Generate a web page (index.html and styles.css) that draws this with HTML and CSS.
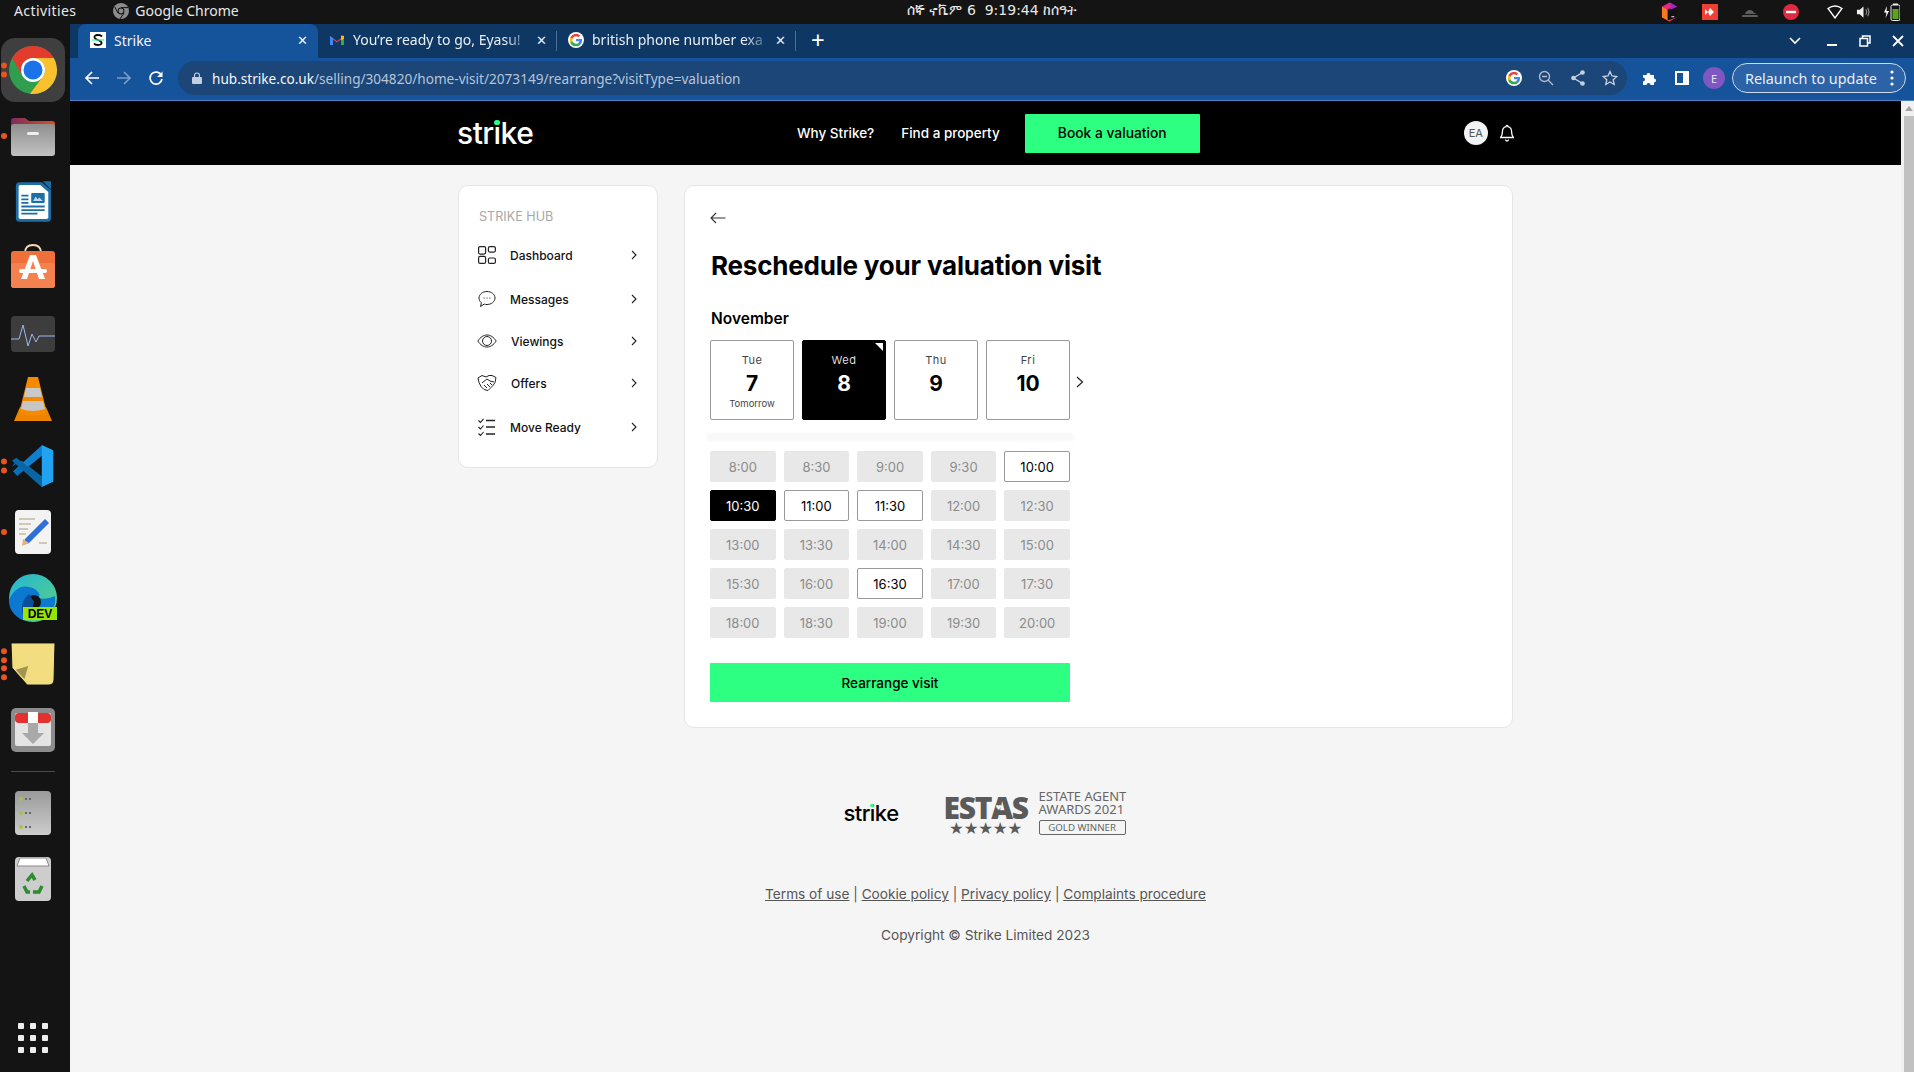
FILE: index.html
```html
<!DOCTYPE html>
<html lang="en">
<head>
<meta charset="utf-8">
<title>Strike</title>
<link rel="stylesheet" href="styles.css">
</head>
<body>
<header class="topbar">
  <span class="activities">Activities</span>
  <span class="app-name">
    <svg class="app-icon" viewBox="0 0 16 16"><circle cx="8" cy="8" r="8" fill="#8b8b8b"/><circle cx="8" cy="8" r="3.4" fill="#141414"/><circle cx="8" cy="8" r="2.4" fill="#8b8b8b"/><path d="M8 4.6h7M5 10l-3.2-6M11 10l-4 6" stroke="#141414" stroke-width="1"/></svg>
    Google Chrome
  </span>
  <span class="clock">ሰኞ ኖቬም 6 &nbsp;9:19:44 ከሰዓት</span>
  <div class="tray">
    <svg class="tray-a" viewBox="0 0 18 20"><path d="M9 0l8 4.500v11L9 20 1 15.500v-11z" fill="#e6287e"/><path d="M1 4.500L9 9v11l-8-4.500z" fill="#f47a20"/><path d="M7 7l10-2.500V15.500L7 19z" fill="#111"/><path d="M10 0l7 4.500-7 3z" fill="#a024c8"/><path d="M11 15h3" stroke="#fff"/></svg>
    <svg class="tray-b" viewBox="0 0 16 16"><rect width="16" height="16" fill="#ee4035"/><path d="M3 5l3 3-3 3zM8 4l4 4-4 4-2-4z" fill="#fff"/></svg>
    <svg class="tray-c" viewBox="0 0 16 10"><path d="M0 10c0-2 1-3 3-3 1-4 7-6 9-1 2 0 4 2 4 4z" fill="#5e5e5e"/><path d="M0 7.500h16" stroke="#141414"/></svg>
    <svg class="tray-d" viewBox="0 0 16 16"><circle cx="8" cy="8" r="8" fill="#df2a3f"/><rect x="3" y="6.800" width="10" height="2.400" fill="#fff"/></svg>
    <svg class="tray-e" viewBox="0 0 16 14"><path d="M1 3.500Q8-1.500 15 3.500L8 13z" fill="none" stroke="#fff" stroke-width="1.400"/></svg>
    <svg class="tray-f" viewBox="0 0 16 14"><path d="M1 4.500h3L8 1v12L4 9.500H1z" fill="#eee"/><path d="M10.500 4q2 3 0 6M12.500 2.500q3 4.500 0 9" fill="none" stroke="#aaa"/></svg>
    <svg class="tray-g" viewBox="0 0 16 18"><path d="M3 3L0 9.500h2.500L1.500 15 5 8H2.500z" fill="#fff"/><rect x="7" y="2" width="9" height="15.500" rx="1.500" fill="none" stroke="#eee"/><rect x="9" y="0.500" width="5" height="1.500" fill="#eee"/><rect x="8.500" y="6" width="6" height="10" fill="#5aa51d"/></svg>
  </div>
</header>

<div class="desktop">
  <aside class="dock">
    <div class="dock-item dock-active">
      <span class="dots"><i></i><i></i></span>
      <svg class="ic-chrome" viewBox="0 0 48 48"><circle cx="24" cy="24" r="24" fill="#2f9e4f"/><path d="M3.200 12A24 24 0 0 1 44.800 12H24A12 12 0 0 0 13.600 18L13.600 30z" fill="#e33b2e"/><path d="M44.800 12A24 24 0 0 1 21 47.800L34.400 30A12 12 0 0 0 24 12z" fill="#fbc02d"/><circle cx="24" cy="24" r="12" fill="#fff"/><circle cx="24" cy="24" r="9.500" fill="#1a73e8"/></svg>
    </div>
    <div class="dock-item">
      <span class="dots"><i></i></span>
      <svg class="ic-44" viewBox="0 0 44 40"><path d="M0 5q0-3 3-3h11l4 3h23q3 0 3 3v14H0z" fill="url(#folder)"/><defs><linearGradient id="folder"><stop offset="0" stop-color="#7b2c5e"/><stop offset="1" stop-color="#d8531e"/></linearGradient><linearGradient id="grey" x1="0" y1="0" x2="0" y2="1"><stop offset="0" stop-color="#8f8f8f"/><stop offset="1" stop-color="#c2c2c2"/></linearGradient></defs><rect y="8" width="44" height="32" rx="3" fill="url(#grey)"/><rect x="16" y="16" width="12" height="3" rx="1.500" fill="#eee"/></svg>
    </div>
    <div class="dock-item">
      <svg class="ic-36" viewBox="0 0 40 46"><path d="M5 1h25l10 9v31q0 4-4 4H5q-4 0-4-4V5q0-4 4-4z" fill="#1c6ea4"/><path d="M6 4h22l9 8v28q0 2-2 2H6q-2 0-2-2V6q0-2 2-2z" fill="#fff"/><path d="M31 0h9v9z" fill="#1c6ea4"/><path d="M7 16h8M7 20h8M7 24h8M7 28h26M7 32h26M7 36h18" stroke="#1c6ea4" stroke-width="2"/><rect x="18" y="13" width="15" height="11" rx="1" fill="#1c6ea4"/><path d="M20 22l3-5 2 3 2-2 4 4z" fill="#bcd9ee"/></svg>
    </div>
    <div class="dock-item">
      <svg class="ic-44 ic-store" viewBox="0 0 44 44"><path d="M14 9q0-8 8-8t8 8" fill="none" stroke="#f4d9b5" stroke-width="1.800"/><rect y="7" width="44" height="37" rx="3" fill="#f0703a"/><rect y="19" width="44" height="25" rx="3" fill="#f48250"/><path d="M19 11h6l9 24h-6l-6-18-6 18h-6z" fill="#fff"/><rect x="8" y="25" width="28" height="4" rx="2" fill="#fff"/></svg>
    </div>
    <div class="dock-item">
      <svg class="ic-44" viewBox="0 0 44 36"><rect width="44" height="36" rx="4" fill="#3d3d3d"/><path d="M0 23h8l4-14 5 21 4-12 4 8 3-6h16" fill="none" stroke="#9db4ee" stroke-width="1"/></svg>
    </div>
    <div class="dock-item">
      <svg class="ic-vlc" viewBox="0 0 40 46"><path d="M1 44l6-14h26l6 14z" fill="#ef8400"/><path d="M15 0h10l9 36q-14 6-28 0z" fill="#f58a00"/><path d="M13 11h14l2 9H11z" fill="#c9c9c9"/><path d="M10 24h20l2 8q-12 4-24 0z" fill="#c6c6c6"/></svg>
    </div>
    <div class="dock-item">
      <span class="dots"><i></i><i></i></span>
      <svg class="ic-44" viewBox="0 0 100 100"><path d="M70 98L12 44l-10 9 10-16 14 2 44 35z" fill="#0b6fb4"/><path d="M5 62l66-60v24L14 72z" fill="#0f7fce"/><path d="M70 2l26 12v72L70 98z" fill="#22a3f2"/><path d="M5 62l9 10 15-13-11-8z" fill="#0b6fb4"/><path d="M2 38l10-7 58 44v23z" fill="#0865a6"/></svg>
    </div>
    <div class="dock-item">
      <span class="dots"><i></i></span>
      <svg class="ic-36" viewBox="0 0 36 44"><rect width="36" height="44" rx="4" fill="#f3f3f3"/><path d="M4 9h16M4 14h12M4 19h9M4 24h7M24 33h8" stroke="#cfc8b4" stroke-width="2"/><path d="M30 9l4 4-20 20-6 2 2-6z" fill="#2f6fd8"/><path d="M8 29l6 4-7 3z" fill="#e5b27a"/></svg>
    </div>
    <div class="dock-item">
      <svg class="ic-edge" viewBox="0 0 48 48"><defs><linearGradient id="edge" x1="0" y1="0" x2="1" y2="1"><stop offset="0" stop-color="#22b5d8"/><stop offset="1" stop-color="#5ed47a"/></linearGradient></defs><circle cx="24" cy="24" r="24" fill="url(#edge)"/><path d="M0 26Q8 8 24 14q8 4 6 10 8 2 16-2 2 14-12 24H14Q0 40 0 26z" fill="#0b78d1"/><circle cx="25" cy="28" r="7" fill="#141414"/><path d="M14 42q-4-14 6-22l5 8-4 14z" fill="#0b4f9c"/><rect x="14" y="33" width="34" height="13" fill="#97e600"/><text x="31" y="44" class="dev-text">DEV</text></svg>
    </div>
    <div class="dock-item">
      <span class="dots dots-four"><i></i><i></i><i></i><i></i></span>
      <svg class="ic-note" viewBox="0 0 48 46"><path d="M1 1l46 0-1 38q0 6-6 6H18L10 36 2 27z" fill="#f2dd80" stroke="#111" stroke-width="1"/><path d="M6 29l13-4-4 14z" fill="#a39650"/></svg>
    </div>
    <div class="dock-item">
      <svg class="ic-44" viewBox="0 0 44 44"><rect width="44" height="44" rx="5" fill="#8c8c8c"/><rect x="4" y="5" width="36" height="33" rx="2" fill="#e4e4e4"/><rect x="4" y="5" width="36" height="10" rx="4" fill="#e33131"/><rect x="17" y="4" width="10" height="11" fill="#fff"/><path d="M17 15h10v10h6L22 36 11 25h6z" fill="#a9a9a9"/></svg>
    </div>
    <div class="dock-sep"></div>
    <div class="dock-item">
      <svg class="ic-36" viewBox="0 0 36 44"><defs><linearGradient id="drive" x1="0" y1="0" x2="0" y2="1"><stop offset="0" stop-color="#9a9a9a"/><stop offset="1" stop-color="#cdcdcd"/></linearGradient></defs><rect width="36" height="44" rx="4" fill="url(#drive)"/><g fill="#a6c44a"><circle cx="6" cy="8" r="2"/><circle cx="6" cy="22" r="2"/><circle cx="6" cy="36" r="2"/></g><path d="M10 7h2v2h-2zM14 7h2v2h-2zM10 21h2v2h-2zM14 21h2v2h-2zM10 35h2v2h-2zM14 35h2v2h-2z" fill="#666"/></svg>
    </div>
    <div class="dock-item">
      <svg class="ic-36" viewBox="0 0 36 44"><rect width="36" height="44" rx="4" fill="#cdcdcd"/><path d="M5 1h26l3 8H2z" fill="#fff" stroke="#888"/><path d="M12 24l5-6 3 5M27 29l-3 6h-6M9 29l3 6h3" fill="none" stroke="#2e8b2e" stroke-width="3.500"/></svg>
    </div>
    <div class="apps-grid"><i></i><i></i><i></i><i></i><i></i><i></i><i></i><i></i><i></i></div>
  </aside>

  <div class="browser">
    <div class="tabstrip">
      <div class="tab tab-active">
        <svg class="fav" viewBox="0 0 16 16"><rect width="16" height="16" fill="#fff"/><path d="M12 4.500Q11 3 8 3 4 3 4.500 5.500 5 7 8 8t3.500 2.500Q12 13 8 13q-3 0-4-1.500" fill="none" stroke="#000" stroke-width="1.800"/><path d="M2 8h12" stroke="#2dff82" stroke-width="1.200"/></svg>
        <span class="tab-title">Strike</span>
        <span class="tab-x">✕</span>
      </div>
      <div class="tab">
        <svg class="fav" viewBox="0 0 16 16"><path d="M1 13V4l7 5 7-5v9h-3V7.500L8 10.500 4 7.500V13z" fill="#ea4335"/><path d="M1 13V4l3 2.200V13z" fill="#4285f4"/><path d="M15 13V4l-3 2.200V13z" fill="#34a853"/><path d="M12 3.500l3 .5v2.500l-3 2z" fill="#fbbc04"/></svg>
        <span class="tab-title tab-fade">You’re ready to go, Eyasu!</span>
        <span class="tab-x">✕</span>
      </div>
      <div class="tab-div"></div>
      <div class="tab tab-third">
        <svg class="fav" viewBox="0 0 48 48"><circle cx="24" cy="24" r="24" fill="#fff"/><path d="M42 24.500c0-1.300-.1-2.500-.3-3.500H24v7h10.200a9 9 0 0 1-3.800 5.700v4.700h6.100c3.500-3.300 5.500-8 5.500-13.900z" fill="#4285f4"/><path d="M24 43c5 0 9.300-1.700 12.500-4.600l-6.100-4.700c-1.700 1.100-3.900 1.800-6.400 1.800-4.900 0-9-3.300-10.500-7.700H7.200v4.900A19 19 0 0 0 24 43z" fill="#34a853"/><path d="M13.500 27.800a11 11 0 0 1 0-7.400v-4.900H7.200a19 19 0 0 0 0 17.200z" fill="#fbbc05"/><path d="M24 12.800c2.800 0 5.200 1 7.200 2.800l5.400-5.400A19 19 0 0 0 7.200 15.500l6.300 4.900c1.500-4.400 5.600-7.600 10.500-7.600z" fill="#ea4335"/></svg>
        <span class="tab-title tab-fade">british phone number exa</span>
        <span class="tab-x">✕</span>
      </div>
      <div class="tab-div"></div>
      <span class="tab-plus">+</span>
      <div class="win-controls">
        <svg class="win-chev" viewBox="0 0 12 8"><path d="M1 1l5 5 5-5" fill="none" stroke="#fff" stroke-width="1.600"/></svg>
        <svg class="win-min" viewBox="0 0 12 12"><rect y="9" width="10" height="2" fill="#fff"/></svg>
        <svg class="win-max" viewBox="0 0 12 12"><path d="M3.500 3.500V1h7.500v7H8.500M1 3.500h7.500V11H1z" fill="none" stroke="#fff" stroke-width="1.500"/></svg>
        <svg class="win-close" viewBox="0 0 12 12"><path d="M1 1l10 10M11 1L1 11" stroke="#fff" stroke-width="1.800"/></svg>
      </div>
    </div>

    <div class="toolbar">
      <svg class="nav-ic" viewBox="0 0 16 16"><path d="M15 8H2M8 2L2 8l6 6" fill="none" stroke="#fff" stroke-width="1.700"/></svg>
      <svg class="nav-ic nav-fwd" viewBox="0 0 16 16"><path d="M1 8h13M8 2l6 6-6 6" fill="none" stroke="#7f9cc2" stroke-width="1.700"/></svg>
      <svg class="nav-ic nav-rel" viewBox="0 0 16 16"><path d="M13.500 5.500A6 6 0 1 0 14 9" fill="none" stroke="#fff" stroke-width="1.700"/><path d="M14.500 1.500v5.500H9z" fill="#fff"/></svg>
      <div class="omnibox">
        <svg class="lock" viewBox="0 0 10 12"><path d="M2.500 5V3.500a2.500 2.500 0 0 1 5 0V5" fill="none" stroke="#c3cfdf" stroke-width="1.100"/><rect y="5" width="10" height="7" rx="1" fill="#c3cfdf"/></svg>
        <span class="url"><b>hub.strike.co.uk</b>/selling/304820/home-visit/2073149/rearrange?visitType=valuation</span>
        <svg class="omni-g" viewBox="0 0 48 48"><circle cx="24" cy="24" r="24" fill="#fff"/><path d="M42 24.500c0-1.300-.1-2.500-.3-3.500H24v7h10.200a9 9 0 0 1-3.800 5.700v4.700h6.100c3.500-3.300 5.500-8 5.500-13.900z" fill="#4285f4"/><path d="M24 43c5 0 9.300-1.700 12.500-4.600l-6.100-4.700c-1.700 1.100-3.900 1.800-6.400 1.800-4.900 0-9-3.300-10.500-7.700H7.200v4.900A19 19 0 0 0 24 43z" fill="#34a853"/><path d="M13.500 27.800a11 11 0 0 1 0-7.400v-4.900H7.200a19 19 0 0 0 0 17.200z" fill="#fbbc05"/><path d="M24 12.800c2.800 0 5.200 1 7.200 2.800l5.400-5.400A19 19 0 0 0 7.200 15.500l6.300 4.900c1.500-4.400 5.600-7.600 10.500-7.600z" fill="#ea4335"/></svg>
        <svg class="omni-ic" viewBox="0 0 16 16"><circle cx="6.500" cy="6.500" r="5" fill="none" stroke="#aebccd" stroke-width="1.400"/><path d="M4 6.500h5M10 10l5 5" stroke="#aebccd" stroke-width="1.400"/></svg>
        <svg class="omni-ic" viewBox="0 0 16 16"><path d="M12.500 2.500l-9 5.500 9 5.500" fill="none" stroke="#c5d0de" stroke-width="1.400"/><circle cx="12.500" cy="2.500" r="2.300" fill="#c5d0de"/><circle cx="3.500" cy="8" r="2.300" fill="#c5d0de"/><circle cx="12.500" cy="13.500" r="2.300" fill="#c5d0de"/></svg>
        <svg class="omni-ic omni-last" viewBox="0 0 16 16"><path d="M8 1.500l2 4.500 4.800.5-3.600 3.200 1 4.800L8 12l-4.200 2.500 1-4.800L1.200 6.500 6 6z" fill="none" stroke="#c5d0de" stroke-width="1.300"/></svg>
      </div>
      <svg class="tool-puzzle" viewBox="0 0 16 16"><path d="M1 5h3.500a2 2 0 1 1 4 0H12v3.500a2 2 0 1 1 0 4V15H8.500a2 2 0 1 0-4 0H1v-3.500a2 2 0 1 0 0-4z" fill="#fff"/></svg>
      <svg class="tool-panel" viewBox="0 0 14 14"><rect width="14" height="14" fill="#fff"/><rect x="2" y="2" width="6" height="10" fill="#15539a"/></svg>
      <span class="profile">E</span>
      <div class="relaunch">
        <span>Relaunch to update</span>
        <svg class="kebab" viewBox="0 0 4 16"><circle cx="2" cy="2" r="1.600" fill="#fff"/><circle cx="2" cy="8" r="1.600" fill="#fff"/><circle cx="2" cy="14" r="1.600" fill="#fff"/></svg>
      </div>
    </div>

    <div class="viewport">
      <div class="page">
        <div class="site-header">
          <div class="logo logo-light">str<span class="logo-i">i<em></em></span>ke</div>
          <nav class="site-nav">
            <a>Why Strike?</a>
            <a>Find a property</a>
            <a class="btn-book">Book a valuation</a>
          </nav>
          <span class="avatar">EA</span>
          <svg class="bell" viewBox="0 0 14 18"><path d="M7 1.500a1 1 0 0 1 1 1.200c3 .6 3.600 3 3.600 5.300 0 3 .9 4.300 1.800 5.500H.6c.9-1.200 1.800-2.500 1.800-5.500 0-2.300.6-4.700 3.600-5.300a1 1 0 0 1 1-1.200z" fill="none" stroke="#fff" stroke-width="1.300"/><path d="M5.500 15.500a1.500 1.500 0 0 0 3 0" fill="none" stroke="#fff" stroke-width="1.300"/></svg>
        </div>

        <div class="layout">
          <aside class="side-card">
            <div class="side-title">STRIKE HUB</div>
            <ul class="side-list">
              <li class="side-row">
                <svg class="side-ic" viewBox="0 0 18 18"><g fill="none" stroke="#222" stroke-width="1.200"><rect x=".6" y=".6" width="7" height="7.500" rx="1.500"/><rect x="10.400" y=".6" width="7" height="5.500" rx="1.500"/><rect x=".6" y="10.400" width="7" height="7" rx="1.500"/><rect x="10.400" y="12" width="7" height="5.400" rx="1.500"/></g></svg>
                <span>Dashboard</span>
                <svg class="chev" viewBox="0 0 6 10"><path d="M1 1l4 4-4 4" fill="none" stroke="#222" stroke-width="1.100"/></svg>
              </li>
              <li class="side-row">
                <svg class="side-ic" viewBox="0 0 18 18"><path d="M9 1.500c4.400 0 8 2.800 8 6.500s-3.600 6.500-8 6.500c-1 0-2-.1-2.800-.4L2.500 16.500l.9-3.700C1.900 11.600 1 9.900 1 8c0-3.700 3.600-6.500 8-6.500z" fill="none" stroke="#222" stroke-width="1"/><path d="M5.600 8h1M8.500 8h1M11.400 8h1" stroke="#222" stroke-width="1.200"/></svg>
                <span>Messages</span>
                <svg class="chev" viewBox="0 0 6 10"><path d="M1 1l4 4-4 4" fill="none" stroke="#222" stroke-width="1.100"/></svg>
              </li>
              <li class="side-row row-view">
                <svg class="side-ic side-ic-wide" viewBox="0 0 20 14"><path d="M.8 7C3.500 3 6.500 1 10 1s6.500 2 9.200 6c-2.700 4-5.700 6-9.200 6S3.500 11 .8 7z" fill="none" stroke="#222" stroke-width="1"/><circle cx="10" cy="7" r="4.500" fill="none" stroke="#222" stroke-width="1"/></svg>
                <span class="label-in">Viewings</span>
                <svg class="chev" viewBox="0 0 6 10"><path d="M1 1l4 4-4 4" fill="none" stroke="#222" stroke-width="1.100"/></svg>
              </li>
              <li class="side-row">
                <svg class="side-ic side-ic-wide" viewBox="0 0 20 18"><path d="M1 4l4-2.500 4 1.500 3-1.500 3 0 4 2-1 5-2 3-3 3-2 2-4-1-3-3-2-4z M5 9l5-4 3 2 4 1M7 11l3 3M10 10l3 3M13 9l2 2" fill="none" stroke="#222" stroke-width="1"/></svg>
                <span class="label-in">Offers</span>
                <svg class="chev" viewBox="0 0 6 10"><path d="M1 1l4 4-4 4" fill="none" stroke="#222" stroke-width="1.100"/></svg>
              </li>
              <li class="side-row">
                <svg class="side-ic" viewBox="0 0 18 18"><path d="M.5 2.500l2 2L5.500.8M.5 9l2 2 3-3.500M.5 15.500l2 2 3-3.500" fill="none" stroke="#222" stroke-width="1.100"/><path d="M8 2.500h9M8 9h9M8 16h9" stroke="#222" stroke-width="1.300"/></svg>
                <span>Move Ready</span>
                <svg class="chev" viewBox="0 0 6 10"><path d="M1 1l4 4-4 4" fill="none" stroke="#222" stroke-width="1.100"/></svg>
              </li>
            </ul>
          </aside>

          <main class="main-card">
            <svg class="back" viewBox="0 0 16 12"><path d="M15.500 6H1M6 1L1 6l5 5" fill="none" stroke="#333" stroke-width="1.100"/></svg>
            <h1 class="title">Reschedule your valuation visit</h1>
            <h2 class="month">November</h2>
            <div class="dates">
              <div class="date"><span class="dow">Tue</span><span class="dnum">7</span><span class="dnote">Tomorrow</span></div>
              <div class="date date-sel"><span class="dow">Wed</span><span class="dnum">8</span></div>
              <div class="date"><span class="dow">Thu</span><span class="dnum">9</span></div>
              <div class="date"><span class="dow">Fri</span><span class="dnum">10</span></div>
              <svg class="date-next" viewBox="0 0 8 12"><path d="M1 1l5.500 5L1 11" fill="none" stroke="#222" stroke-width="1.200"/></svg>
            </div>
            <div class="fade-rule"></div>
            <div class="times">
              <span class="time off">8:00</span><span class="time off">8:30</span><span class="time off">9:00</span><span class="time off">9:30</span><span class="time">10:00</span>
              <span class="time sel">10:30</span><span class="time">11:00</span><span class="time">11:30</span><span class="time off">12:00</span><span class="time off">12:30</span>
              <span class="time off">13:00</span><span class="time off">13:30</span><span class="time off">14:00</span><span class="time off">14:30</span><span class="time off">15:00</span>
              <span class="time off">15:30</span><span class="time off">16:00</span><span class="time">16:30</span><span class="time off">17:00</span><span class="time off">17:30</span>
              <span class="time off">18:00</span><span class="time off">18:30</span><span class="time off">19:00</span><span class="time off">19:30</span><span class="time off">20:00</span>
            </div>
            <button class="btn-rearrange">Rearrange visit</button>
          </main>
        </div>

        <footer class="site-footer">
          <div class="awards">
            <div class="logo logo-dark">str<span class="logo-i">i<em></em></span>ke</div>
            <div class="estas">
              <div class="estas-word">ESTAS</div>
              <div class="estas-stars">★★★★★</div>
            </div>
            <div class="estas-info">
              <div>ESTATE AGENT</div>
              <div>AWARDS 2021</div>
              <div class="gold">GOLD WINNER</div>
            </div>
          </div>
          <p class="links"><a>Terms of use</a> | <a>Cookie policy</a> | <a>Privacy policy</a> | <a>Complaints procedure</a></p>
          <p class="copy">Copyright © Strike Limited 2023</p>
        </footer>
      </div>
      <div class="scrollbar"><span class="sb-up"></span><span class="sb-thumb"></span></div>
    </div>
  </div>
</div>
</body>
</html>
```

FILE: styles.css
```css
* { box-sizing: border-box; }
html, body { margin: 0; height: 1072px; overflow: hidden; }
body { font-family: "Noto Sans", sans-serif; background: #141414; display: flex; flex-direction: column; }
ul { list-style: none; margin: 0; padding: 0; }
svg { display: block; flex: none; }

/* top bar */
.topbar { height: 24px; flex: none; background: #141414; color: #e8e8e8; font-size: 14px; display: flex; align-items: center; position: relative; padding-bottom: 3px; }
.activities { margin-left: 14px; letter-spacing: 0.4px; }
.app-name { margin-left: 37px; display: flex; align-items: center; gap: 6px; }
.app-icon { width: 16px; height: 16px; }
.clock { position: absolute; left: 907px; top: 2px; font-size: 14px; font-family: "DejaVu Sans", "Noto Sans", sans-serif; white-space: nowrap; }
.tray { position: absolute; inset: 0 auto 0 1661px; display: flex; align-items: center; }
.tray-a { width: 17px; height: 20px; }
.tray-b { width: 16px; height: 16px; margin-left: 24px; }
.tray-c { width: 16px; height: 10px; margin-left: 24px; }
.tray-d { width: 16px; height: 16px; margin-left: 25px; }
.tray-e { width: 16px; height: 14px; margin-left: 28px; }
.tray-f { width: 15px; height: 14px; margin-left: 13px; }
.tray-g { width: 16px; height: 18px; margin-left: 13px; }

/* dock */
.desktop { flex: 1; display: flex; min-height: 0; }
.dock { width: 70px; flex: none; background: #141414; padding-top: 13px; position: relative; display: flex; flex-direction: column; }
.dock-item { height: 66px; display: flex; align-items: center; justify-content: center; padding-right: 4px; position: relative; flex: none; }
.dock-active { background: #3f3f3f; border-radius: 14px; margin: 1px 5px 1px 1px; height: 64px; padding-right: 0; }
.dots { position: absolute; left: 1px; top: 50%; transform: translateY(-50%); display: flex; flex-direction: column; gap: 3px; }
.dock-active .dots { left: 0; }
.dots-four { gap: 2.500px; }
.dots i { width: 6px; height: 6px; border-radius: 50%; background: #e95420; display: block; }
.ic-chrome { width: 48px; height: 48px; }
.ic-44 { width: 44px; height: auto; }
.ic-store { margin-top: -5px; }
.ic-note { width: 46px; height: 44px; }
.ic-36 { width: 36px; height: 44px; }
.ic-vlc { width: 40px; height: 46px; }
.ic-edge { width: 48px; height: 48px; }
.dev-text { font: 700 12px "Liberation Sans", sans-serif; fill: #000; text-anchor: middle; }
.dock-sep { height: 1px; background: #4a4a4a; margin: 8px 15px 8px 11px; flex: none; }
.apps-grid { position: absolute; left: 18px; top: 999px; display: grid; grid-template-columns: repeat(3, 6px); gap: 6px; }
.apps-grid i { width: 6px; height: 6px; background: #eee; border-radius: 1px; display: block; }

/* browser chrome */
.browser { flex: 1; min-width: 0; display: flex; flex-direction: column; }
.tabstrip { height: 34px; flex: none; background: #0e3763; display: flex; align-items: stretch; color: #e8eef6; font-size: 14px; padding-left: 8px; }
.tab { width: 238px; display: flex; align-items: center; padding: 0 9px 3px 11px; flex: none; }
.tab-active { width: 240px; background: #15539a; border-radius: 8px 8px 0 0; padding-left: 12px; padding-right: 10px; padding-bottom: 2px; color: #f1f5fb; }
.tab-third { padding-left: 11px; }
.fav { width: 16px; height: 16px; margin-right: 8px; }
.tab-title { flex: 1; white-space: nowrap; overflow: hidden; min-width: 0; }
.tab-fade { -webkit-mask-image: linear-gradient(to right, #000 85%, transparent); mask-image: linear-gradient(to right, #000 85%, transparent); }
.tab-x { font-size: 13px; margin-left: 4px; }
.tab-div { width: 1px; height: 20px; align-self: center; background: #4d6f95; flex: none; }
.tab-plus { font-size: 24px; font-weight: 400; line-height: 32px; margin-left: 15px; color: #fff; }
.win-controls { margin-left: auto; display: flex; align-items: center; padding-right: 10px; }
.win-chev { width: 12px; height: 8px; }
.win-min { width: 12px; height: 12px; margin-left: 26px; }
.win-max { width: 12px; height: 12px; margin-left: 20px; }
.win-close { width: 12px; height: 12px; margin-left: 21px; }

.toolbar { height: 43px; flex: none; background: #15539a; border-bottom: 1px solid #4a80c4; display: flex; align-items: center; padding-left: 14px; padding-bottom: 2px; }
.nav-ic { width: 16px; height: 16px; }
.nav-fwd { margin-left: 16px; }
.nav-rel { margin-left: 16px; }
.omnibox { width: 1449px; height: 34px; margin-left: 14px; background: #1c4678; border-radius: 17px; display: flex; align-items: center; padding-left: 14px; flex: none; }
.lock { width: 10px; height: 12px; }
.url { margin-left: 10px; flex: 1; font-size: 13.600px; color: #b5c4d8; white-space: nowrap; }
.url b { font-weight: 400; color: #f3f6fa; }
.omni-g { width: 16px; height: 16px; margin-right: 16px; }
.omni-ic { width: 16px; height: 16px; margin-right: 16px; }
.omni-ic.omni-last { margin-right: 9px; }
.tool-puzzle { width: 16px; height: 16px; margin-left: 15px; }
.tool-panel { width: 14px; height: 14px; margin-left: 17px; }
.profile { width: 22px; height: 22px; margin-left: 14px; border-radius: 50%; background: #7e57c2; color: #e8e0f5; font-size: 11px; display: flex; align-items: center; justify-content: center; flex: none; }
.relaunch { width: 174px; height: 30px; margin-left: 7px; border-radius: 15px; border: 1px solid #cfd9e8; background: #2c62a6; color: #e8eef7; font-size: 14.400px; display: flex; align-items: center; padding-left: 12px; flex: none; }
.relaunch span { flex: 1; white-space: nowrap; }
.kebab { width: 4px; height: 16px; margin-right: 11px; }

/* page */
.viewport { flex: 1; min-height: 0; display: flex; background: #f5f5f5; }
.page { flex: 1; min-width: 0; font-family: Inter, "Liberation Sans", sans-serif; color: #000; }
.scrollbar { width: 13px; flex: none; background: #f1f1f1; display: flex; flex-direction: column; align-items: flex-end; }
.sb-up { width: 10px; height: 15px; position: relative; background: #f1f1f1; }
.sb-up::after { content: ""; position: absolute; left: 1px; top: 5px; border: 4px solid transparent; border-top: 0; border-bottom: 5px solid #a3a3a3; }
.sb-thumb { width: 10px; flex: 1; background: #c1c1c1; }

.site-header { height: 64px; background: #000; display: flex; align-items: center; padding-left: 387px; color: #fff; }
.logo { font-family: Inter, sans-serif; font-weight: 500; letter-spacing: -0.5px; line-height: 1; }
.logo-i { position: relative; display: inline-block; }
.logo-i em { position: absolute; left: 50%; width: 0.18em; height: 0.18em; margin-left: -0.09em; top: 0.07em; border-radius: 50%; background: #2dff82; }
.logo-light { font-size: 30px; color: #fff; width: 75px; white-space: nowrap; }
.logo-dark { font-size: 22px; color: #000; white-space: nowrap; }
.site-nav { margin-left: 265px; display: flex; align-items: center; font-size: 13.500px; font-weight: 500; }
.site-nav a { margin-right: 27px; white-space: nowrap; }
.site-nav .btn-book { margin: 0 0 0 -2px; width: 175px; height: 39px; background: #2dff82; border-radius: 1px; color: #000; font-size: 13.800px; display: flex; align-items: center; justify-content: center; }
.avatar { width: 24px; height: 24px; margin-left: 264px; border-radius: 50%; background: #f3f3f3; color: #555; font-size: 11px; display: flex; align-items: center; justify-content: center; flex: none; }
.bell { width: 14px; height: 18px; margin-left: 12px; }

.layout { display: flex; align-items: flex-start; gap: 26px; padding: 20px 0 0 388px; }
.side-card { width: 200px; height: 283px; background: #fff; border: 1px solid #e6e6e6; border-radius: 10px; padding: 23px 18px 0 19px; }
.side-title { font-size: 12.600px; color: #a8a8a8; line-height: 16px; margin-left: 1px; }
.side-list { margin-top: 8px; }
.side-row { display: flex; align-items: center; font-size: 12px; font-weight: 500; color: #111; height: 44px; }
.side-row span { margin-left: 14px; flex: 1; }
.side-row .label-in { margin-left: 15px; }
.side-ic { width: 18px; height: 18px; }
.side-ic-wide { width: 20px; height: 18px; margin-left: -1px; margin-right: -1px; }
.chev { width: 6px; height: 10px; margin-right: 2px; }
.side-row.row-view { height: 40px; }

.main-card { width: 829px; height: 543px; background: #fff; border: 1px solid #e6e6e6; border-radius: 10px; padding: 26px 24px 0 25px; }
.back { width: 16px; height: 12px; }
.title { font-size: 26px; font-weight: 700; line-height: 34px; margin: 25px 0 0 1px; letter-spacing: -0.2px; }
.month { font-size: 15.500px; font-weight: 600; line-height: 20px; margin: 26px 0 0 1px; }
.dates { display: flex; align-items: center; gap: 8px; margin-top: 11px; }
.date { width: 84px; height: 80px; border: 1px solid #999; border-radius: 2px; display: flex; flex-direction: column; align-items: center; padding-top: 12px; position: relative; }
.date-sel { background: #000; border-color: #000; color: #fff; }
.date-sel::after { content: ""; position: absolute; right: 2px; top: 2px; border-top: 8px solid #fff; border-left: 8px solid transparent; }
.dow { font-size: 11px; line-height: 14px; letter-spacing: 0.5px; color: #444; }
.date-sel .dow { color: #ddd; }
.dnum { font-size: 21px; font-weight: 700; line-height: 24px; margin-top: 5px; }
.dnote { font-size: 9.500px; line-height: 12px; color: #444; margin-top: 2px; }
.date-next { width: 8px; height: 12px; margin: 4px 0 0 -2px; }
.fade-rule { width: 368px; height: 8px; margin: 13px 0 0 -4px; background: #f8f8f8; filter: blur(1.500px); }
.times { width: 360px; display: grid; grid-template-columns: repeat(5, 1fr); gap: 8px; margin-top: 10px; }
.time { height: 31px; border: 1px solid #999; border-radius: 2px; font-size: 13px; display: flex; align-items: center; justify-content: center; }
.time.off { background: #e8e8e8; border-color: #e8e8e8; color: #8c8c8c; }
.time.sel { background: #000; border-color: #000; color: #fff; }
.btn-rearrange { display: block; width: 360px; height: 39px; margin-top: 25px; background: #2dff82; border: 0; border-radius: 1px; font: 500 13.500px Inter, sans-serif; color: #000; }

.site-footer { text-align: center; color: #555; font-size: 13.650px; padding-top: 62px; }
.awards { display: flex; justify-content: center; align-items: center; margin-left: -2px; height: 50px; }
.logo-dark { margin-right: 45px; margin-top: -4px; }
.estas { color: #5a5a5a; line-height: 1; width: 84px; }
.estas-word { font: 800 30px/27px "Open Sans", sans-serif; letter-spacing: -1.300px; position: relative; }
.estas-word::after { content: "♥"; position: absolute; left: 52px; top: 10px; font: 7px/8px "DejaVu Sans", sans-serif; letter-spacing: 0; color: #f5f5f5; }
.estas-stars { font: 16.500px/15px "DejaVu Sans", sans-serif; letter-spacing: -0.200px; }
.estas-info { margin-left: 11px; margin-top: -5px; font: 13px/13px "Noto Sans", sans-serif; color: #666; text-align: left; width: 87px; white-space: nowrap; }
.gold { border: 1px solid #666; border-radius: 2px; font-size: 9.700px; line-height: 13px; text-align: center; margin-top: 4px; }
.links { margin: 44px 0 0; line-height: 20px; }
.links a { text-decoration: underline; }
.copy { margin: 21px 0 0; line-height: 20px; }
```
